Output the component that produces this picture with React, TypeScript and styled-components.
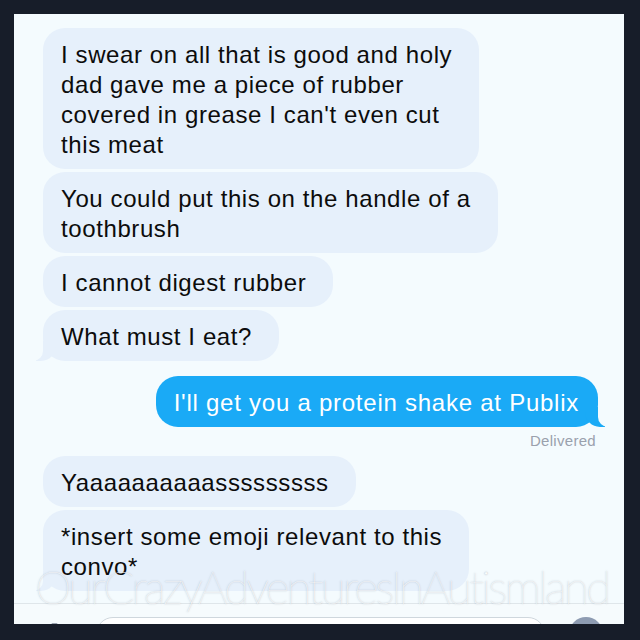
import styled, { createGlobalStyle, css } from "styled-components";

const SCREEN_BG = "#f4fbfe";
const THEM_BG = "#e6f0fb";
const ME_BG = "#1aaaf6";

const GlobalStyle = createGlobalStyle`
  html, body {
    margin: 0;
    padding: 0;
    background: #171d29;
  }
  #root {
    width: 640px;
    height: 640px;
  }
`;

const Frame = styled.div`
  width: 640px;
  height: 640px;
  box-sizing: border-box;
  padding: 14px 16px 16px 14px;
  background: #171d29;
`;

const Screen = styled.div`
  position: relative;
  display: flex;
  flex-direction: column;
  height: 100%;
  overflow: hidden;
  background: ${SCREEN_BG};
`;

const Thread = styled.div`
  flex: 1;
  min-height: 0;
  display: flex;
  flex-direction: column;
  gap: 3px;
  padding: 14px 26px 0 29px;
  overflow: hidden;
`;

const Bubble = styled.div<{ $me?: boolean; $tail?: boolean; $gap?: number }>`
  position: relative;
  align-self: ${(p) => (p.$me ? "flex-end" : "flex-start")};
  margin-top: ${(p) => p.$gap ?? 0}px;
  padding: ${(p) => (p.$me ? "12px 19px 9px 18px" : "12px 27px 9px 18px")};
  border-radius: 22px;
  background: ${(p) => (p.$me ? ME_BG : THEM_BG)};
  color: ${(p) => (p.$me ? "#ffffff" : "#0c0c0c")};
  font-family: "Liberation Sans", Arial, sans-serif;
  font-size: 24px;
  line-height: 30px;
  letter-spacing: ${(p) => (p.$me ? "0.75px" : "0.6px")};
  white-space: nowrap;

  ${(p) =>
    p.$tail &&
    (p.$me
      ? css`
          &::before {
            content: "";
            position: absolute;
            bottom: 0;
            right: -7px;
            width: 20px;
            height: 20px;
            background: ${ME_BG};
            border-bottom-left-radius: 15px;
          }
          &::after {
            content: "";
            position: absolute;
            bottom: 0;
            right: -10px;
            width: 10px;
            height: 20px;
            background: ${SCREEN_BG};
            border-bottom-left-radius: 10px;
          }
        `
      : css`
          &::before {
            content: "";
            position: absolute;
            bottom: 0;
            left: -7px;
            width: 20px;
            height: 20px;
            background: ${THEM_BG};
            border-bottom-right-radius: 15px;
          }
          &::after {
            content: "";
            position: absolute;
            bottom: 0;
            left: -10px;
            width: 10px;
            height: 20px;
            background: ${SCREEN_BG};
            border-bottom-right-radius: 10px;
          }
        `)}
`;

const Status = styled.div`
  align-self: flex-end;
  margin: 2px 2px 3px 0;
  font-family: "Liberation Sans", Arial, sans-serif;
  font-size: 15px;
  line-height: 18px;
  letter-spacing: 0.3px;
  color: #9aa1ad;
`;

const Toolbar = styled.div`
  flex: 0 0 21px;
  box-sizing: border-box;
  overflow: hidden;
  display: flex;
  align-items: flex-start;
  padding: 13px 0 0 33px;
  border-top: 1px solid #dfe6ea;
  background: #f6fbfd;
`;

const CameraIcon = styled.svg`
  flex: 0 0 auto;
  margin-top: 6px;
  width: 15px;
  height: 12px;
`;

const Input = styled.div`
  flex: 0 0 449px;
  height: 34px;
  margin-left: 34px;
  box-sizing: border-box;
  border: 1px solid #cfd7dd;
  border-radius: 17px;
  background: #ffffff;
`;

const SendButton = styled.div`
  flex: 0 0 34px;
  height: 34px;
  margin-left: 24px;
  border-radius: 50%;
  background: #8e9cb2;
`;

const Watermark = styled.div`
  position: absolute;
  left: 21px;
  bottom: 14px;
  font-family: Lato, "Open Sans", sans-serif;
  font-weight: 100;
  font-size: 46px;
  line-height: 1;
  letter-spacing: -2.8px;
  white-space: nowrap;
  color: rgba(255, 255, 255, 0.95);
  text-shadow: 0 0 1.5px rgba(60, 70, 90, 0.5);
  pointer-events: none;
`;

const App = () => {
  return (
    <Frame>
      <GlobalStyle />
      <Screen>
        <Thread>
          <Bubble>
            I swear on all that is good and holy
            <br />
            dad gave me a piece of rubber
            <br />
            covered in grease I can't even cut
            <br />
            this meat
          </Bubble>
          <Bubble>
            You could put this on the handle of a
            <br />
            toothbrush
          </Bubble>
          <Bubble>I cannot digest rubber</Bubble>
          <Bubble $tail>What must I eat?</Bubble>
          <Bubble $me $tail $gap={12}>
            I'll get you a protein shake at Publix
          </Bubble>
          <Status>Delivered</Status>
          <Bubble>Yaaaaaaaaaasssssssss</Bubble>
          <Bubble $tail>
            *insert some emoji relevant to this
            <br />
            convo*
          </Bubble>
        </Thread>
        <Toolbar>
          <CameraIcon viewBox="0 0 15 12">
            <rect x="0" y="2" width="15" height="10" rx="2" fill="#9aa3b0" />
            <rect x="4.5" y="0" width="6" height="3" rx="1" fill="#9aa3b0" />
          </CameraIcon>
          <Input />
          <SendButton />
        </Toolbar>
        <Watermark>OurCrazyAdventuresInAutismland</Watermark>
      </Screen>
    </Frame>
  );
};

export default App;
